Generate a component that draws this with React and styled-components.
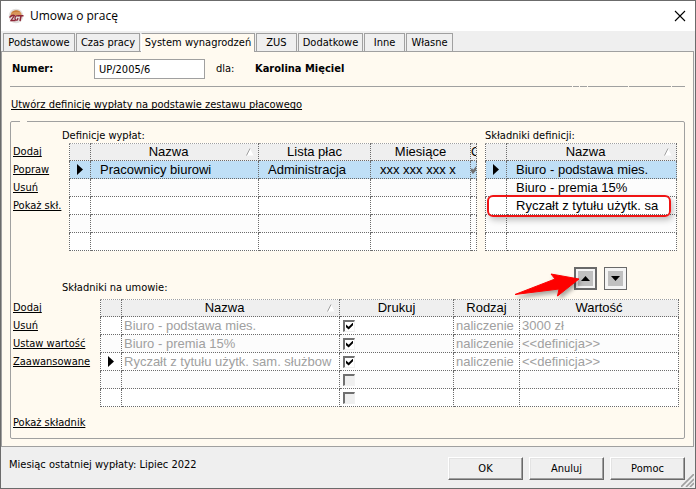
import React from "react";
import styled, { createGlobalStyle, css } from "styled-components";

const GlobalStyle = createGlobalStyle`
  * { box-sizing: border-box; }
  body {
    margin: 0;
    background: #efefef;
    color: #000;
    font: 11px/16px "DejaVu Sans Condensed", "DejaVu Sans", Tahoma, sans-serif;
  }
`;

const Window = styled.div`
  position: relative;
  display: flex;
  flex-direction: column;
  min-height: 100vh;
  border: 1px solid #6b6b6b;
  background: #efefef;
`;

const TitleBar = styled.header`
  display: flex;
  align-items: center;
  gap: 6px;
  height: 30px;
  padding: 0 9px 0 7px;
  background: #fff;
`;

const Title = styled.h1`
  flex: 1;
  margin: 0;
  font: 400 12px/16px "Open Sans", "Noto Sans", sans-serif;
`;

const CloseButton = styled.button`
  display: flex;
  padding: 0;
  border: 0;
  background: none;
`;

const TabList = styled.div`
  display: flex;
  align-items: flex-end;
  gap: 1px;
  padding: 2px 2px 0;
`;

const Tab = styled.button`
  width: ${(p) => p.$width}px;
  height: 18px;
  padding: 0 2px;
  border: 1px solid #a0a0a0;
  border-bottom: 0;
  background: ${(p) => (p.$active ? "#fffaf0" : "#efefef")};
  color: inherit;
  font: inherit;
  white-space: nowrap;
  ${(p) =>
    p.$active &&
    css`
      z-index: 1;
      height: 19px;
      margin-bottom: -1px;
      border-left-color: #fff;
    `}
`;

const Page = styled.main`
  margin-right: 1px;
  padding: 7px 8px;
  border: 1px solid #a0a0a0;
  background: #fffaf0;
`;

const ContractRow = styled.div`
  display: flex;
  align-items: center;
  padding-left: 2px;
  line-height: 18px;
`;

const NumberLabel = styled.label`
  width: 82px;
  font-weight: 700;
`;

const NumberInput = styled.input`
  width: 111px;
  height: 20px;
  margin-right: 11px;
  padding: 0 4px;
  border: 1px solid #a0a0a0;
  background: #fff;
  color: inherit;
  font: inherit;
`;

const ForLabel = styled.span`
  width: 39px;
`;

const Separator = styled.div`
  display: flex;
  gap: 1px;
  height: 1px;
  margin: 7px 0 10px;
`;

const Dash = styled.span`
  background: #a0a0a0;
  flex: ${(p) => (p.$width ? `0 0 ${p.$width}px` : "1")};
`;

const Link = styled.a`
  color: #000;
  text-decoration: underline;
  text-underline-offset: 1px;
  text-decoration-skip-ink: none;
  white-space: nowrap;
`;

const TemplateRow = styled.div`
  padding: 0 1px 8px;
`;

const Group = styled.fieldset`
  min-width: 0;
  margin: 0;
  padding: 5px 5px 7px 2px;
  border: 1px solid #a0a0a0;
  border-radius: 2px;
`;

const GroupLegend = styled.legend`
  width: 7px;
  height: 1px;
  margin-left: 7px;
  padding: 0;
`;

const UpperRow = styled.div`
  display: flex;
  padding-right: 2px;
`;

const LinkColumn = styled.nav`
  display: flex;
  flex-direction: column;
  align-items: flex-start;
  flex: 0 0 ${(p) => p.$width}px;
  margin-top: ${(p) => p.$top}px;
  line-height: 18px;
`;

const DefinitionsBlock = styled.div`
  flex: 1;
  min-width: 0;
  margin-right: 8px;
`;

const ComponentsBlock = styled.div`
  flex: 0 0 192px;
`;

const BlockLabel = styled.div`
  height: 16px;
  line-height: 18px;
  white-space: nowrap;
`;

const TableFrame = styled.div`
  position: relative;
  flex: 1;
  min-width: 0;
  margin-left: ${(p) => p.$indent || 0}px;
`;

const Table = styled.table`
  width: 100%;
  table-layout: fixed;
  border-collapse: collapse;
  background: #fff;
  font: 13px/17px "Liberation Sans", Arial, sans-serif;
`;

const Col = styled.col`
  width: ${(p) => (p.$width ? `${p.$width}px` : "auto")};
`;

const HeadCell = styled.th`
  height: 17px;
  padding: 0;
  border: 1px dotted #6b6b6b;
  border-top-color: #a0a0a0;
  background: #efefef;
  font-weight: 400;
`;

const HeadContent = styled.div`
  display: flex;
  align-items: center;
  overflow: hidden;
  height: 16px;
  padding-right: ${(p) => (p.$sorted ? 4 : 0)}px;
  line-height: 18px;
  white-space: nowrap;
`;

const HeadText = styled.span`
  flex: 1;
  text-align: center;
`;

const Row = styled.tr`
  height: 18px;
  background: ${(p) => (p.$selected ? "#bfdff6" : p.$alternate ? "#fcfcfc" : "#fff")};
`;

const Cell = styled.td`
  height: 18px;
  padding: 0;
  border: 1px dotted #6b6b6b;
  color: ${(p) => (p.$muted ? "#a0a0a0" : "#000")};
`;

const CellContent = styled.div`
  display: flex;
  align-items: center;
  overflow: hidden;
  height: 17px;
  padding-left: ${(p) => p.$indent}px;
  white-space: nowrap;
  svg { flex: none; }
`;

const Checkbox = styled.input`
  appearance: none;
  position: relative;
  width: 12px;
  height: 12px;
  margin: 0;
  border: 1px solid #f1f1f1;
  border-top: 2px solid #707070;
  border-left: 2px solid #707070;
  background: #efefef;
  &:checked { background: #fff; }
  &:checked::before {
    content: "";
    position: absolute;
    inset: 1px 1px 1px 1px;
    background: #000;
    clip-path: polygon(0 30%, 38% 62%, 100% 0, 100% 38%, 38% 100%, 0 68%);
  }
`;

const Callout = styled.div`
  position: absolute;
  top: 52px;
  left: 2px;
  right: 6px;
  height: 22px;
  border: 2px solid #f01414;
  border-radius: 6px;
  box-shadow: 2px 3px 6px rgba(0, 0, 0, 0.25);
  pointer-events: none;
`;

const MiddleRow = styled.div`
  display: flex;
  justify-content: space-between;
  height: 28px;
  margin: 16px 0 4px;
  padding: 0 52px 0 49px;
`;

const LowerLabel = styled(BlockLabel)`
  align-self: flex-end;
`;

const MoveButtons = styled.div`
  position: relative;
  display: flex;
  align-items: flex-start;
  gap: 7px;
`;

const MoveButton = styled.button`
  display: flex;
  align-items: center;
  justify-content: center;
  width: 23px;
  height: 23px;
  padding: 0;
  border: ${(p) => (p.$focused ? "2px solid #696969" : "1px solid #696969")};
  background: #c0c0c0;
  box-shadow: inset 0 0 0 ${(p) => (p.$focused ? 2 : 3)}px #f4f4f4;
`;

const PointerArrow = styled.svg`
  position: absolute;
  top: 0;
  left: -64px;
  filter: drop-shadow(2px 3px 2px rgba(0, 0, 0, 0.35));
  pointer-events: none;
`;

const LowerRow = styled.div`
  display: flex;
  align-items: flex-start;
`;

const ShowRow = styled.div`
  margin-top: 8px;
`;

const Footer = styled.footer`
  display: flex;
  justify-content: space-between;
  align-items: flex-start;
  flex: 1;
  padding: 10px 10px 8px 8px;
`;

const Actions = styled.div`
  display: flex;
  gap: 6px;
`;

const ActionButton = styled.button`
  width: 75px;
  height: 23px;
  padding: 0;
  border: 1px solid #fff;
  border-right-color: #696969;
  border-bottom-color: #696969;
  background: #efefef;
  box-shadow: inset -1px -1px 0 #a0a0a0, inset 1px 1px 0 #e3e3e3;
  color: inherit;
  font: inherit;
`;

const ResizeGrip = styled.svg`
  position: absolute;
  right: 1px;
  bottom: 1px;
`;

const AppLogo = () => (
  <svg width="16" height="16" viewBox="0 0 16 16" aria-hidden="true">
    <circle cx="8" cy="8" r="7.300" fill="#e2e0de" />
    <path d="M2.500 7A5.800 5.800 0 0 1 13.800 6.500L12.500 7.500H8L2.500 9Z" fill="#d8955a" />
    <path d="M3.500 5Q7 .8 12 4Q8 3.200 3.500 5Z" fill="#c67a35" />
    <path d="M1.500 9.500Q4 6.500 6.500 7.500L3 12.500H7.500" fill="none" stroke="#8e2637" strokeWidth="1.300" />
    <path d="M10.500 8Q7.500 7 7 10Q7 12.800 9.500 11.800L10 10" fill="none" stroke="#8e2637" strokeWidth="1.300" />
    <path d="M10 7.800H15.500M13 8L12 13" fill="none" stroke="#8e2637" strokeWidth="1.500" />
  </svg>
);

const SortMark = () => (
  <svg width="8" height="8" viewBox="0 0 8 8" aria-hidden="true">
    <path d="M4 0.5L7.5 7.5H0.5Z" fill="#fff" />
    <path d="M0.5 7.5L4 0.5" stroke="#a0a0a0" fill="none" />
  </svg>
);

const RowMarker = () => (
  <svg width="6" height="11" viewBox="0 0 6 11" aria-label="Bieżący wiersz">
    <path d="M0 0L6 5.5L0 11Z" fill="#000" />
  </svg>
);

const GrayCheck = () => (
  <svg width="9" height="9" viewBox="0 0 9 9" aria-hidden="true">
    <path d="M0 4L2 7L7 1" stroke="#707070" strokeWidth="2.6" fill="none" />
  </svg>
);

const tabs = [
  ["Podstawowe", 72],
  ["Czas pracy", 64],
  ["System wynagrodzeń", 114],
  ["ZUS", 41],
  ["Dodatkowe", 65],
  ["Inne", 41],
  ["Własne", 47],
];

const separatorDashes = [null, 6, 7, 40, 42, 13];

const definitionColumns = [
  { width: 21 },
  { title: "Nazwa", sorted: true },
  { title: "Lista płac", width: 112 },
  { title: "Miesiące", width: 100 },
  { title: "O", width: 6 },
];

const componentColumns = [{ width: 21 }, { title: "Nazwa", sorted: true }];

const contractColumns = [
  { width: 21 },
  { title: "Nazwa", sorted: true },
  { title: "Drukuj", width: 114 },
  { title: "Rodzaj", width: 66 },
  { title: "Wartość", width: 159 },
];

const contractRows = [
  ["Biuro - podstawa mies.", "naliczenie", "3000 zł"],
  ["Biuro - premia 15%", "naliczenie", "<<definicja>>"],
  ["Ryczałt z tytułu użytk. sam. służbow", "naliczenie", "<<definicja>>"],
  ["", "", ""],
  ["", "", ""],
];

function Grid({ label, columns, rows, current, selected, indent, muted }) {
  return (
    <Table aria-label={label}>
      <colgroup>
        {columns.map((c, i) => (
          <Col key={i} $width={c.width} />
        ))}
      </colgroup>
      <thead>
        <tr>
          {columns.map((c, i) => (
            <HeadCell key={i} scope="col">
              <HeadContent $sorted={c.sorted}>
                <HeadText>{c.title}</HeadText>
                {c.sorted && <SortMark />}
              </HeadContent>
            </HeadCell>
          ))}
        </tr>
      </thead>
      <tbody>
        {rows.map((cells, r) => (
          <Row key={r} $selected={r === selected} $alternate={r % 2 === 1}>
            <Cell>
              <CellContent $indent={7}>{r === current && <RowMarker />}</CellContent>
            </Cell>
            {cells.map((content, i) => (
              <Cell key={i} $muted={muted}>
                <CellContent $indent={typeof content === "string" ? indent : muted ? 3 : 0}>{content}</CellContent>
              </Cell>
            ))}
          </Row>
        ))}
      </tbody>
    </Table>
  );
}

export default function App() {
  return (
    <>
      <GlobalStyle />
      <Window>
        <TitleBar>
          <AppLogo />
          <Title>Umowa o pracę</Title>
          <CloseButton aria-label="Zamknij">
            <svg width="12" height="12" viewBox="0 0 12 12">
              <path d="M1 1L11 11M11 1L1 11" stroke="#000" strokeWidth="1.1" />
            </svg>
          </CloseButton>
        </TitleBar>

        <TabList role="tablist">
          {tabs.map(([name, width], i) => (
            <Tab key={name} role="tab" aria-selected={i === 2} $width={width} $active={i === 2}>
              {name}
            </Tab>
          ))}
        </TabList>

        <Page>
          <ContractRow>
            <NumberLabel htmlFor="number">Numer:</NumberLabel>
            <NumberInput id="number" defaultValue="UP/2005/6" />
            <ForLabel>dla:</ForLabel>
            <strong>Karolina Mięciel</strong>
          </ContractRow>
          <Separator>
            {separatorDashes.map((width, i) => (
              <Dash key={i} $width={width} />
            ))}
          </Separator>
          <TemplateRow>
            <Link href="#template">Utwórz definicję wypłaty na podstawie zestawu płacowego</Link>
          </TemplateRow>

          <Group>
            <GroupLegend />
            <UpperRow>
              <LinkColumn $width={49} $top={16}>
                <Link href="#add">Dodaj</Link>
                <Link href="#edit">Popraw</Link>
                <Link href="#delete">Usuń</Link>
                <Link href="#show">Pokaż skł.</Link>
              </LinkColumn>
              <DefinitionsBlock>
                <BlockLabel>Definicje wypłat:</BlockLabel>
                <TableFrame $indent={7}>
                  <Grid
                    label="Definicje wypłat"
                    columns={definitionColumns}
                    rows={[
                      ["Pracownicy biurowi", "Administracja", "xxx xxx xxx x", <GrayCheck key="check" />],
                      ["", "", "", ""],
                      ["", "", "", ""],
                      ["", "", "", ""],
                      ["", "", "", ""],
                    ]}
                    current={0}
                    selected={0}
                    indent={9}
                  />
                </TableFrame>
              </DefinitionsBlock>
              <ComponentsBlock>
                <BlockLabel>Składniki definicji:</BlockLabel>
                <TableFrame>
                  <Grid
                    label="Składniki definicji"
                    columns={componentColumns}
                    rows={[["Biuro - podstawa mies."], ["Biuro - premia 15%"], ["Ryczałt z tytułu użytk. sa"], [""], [""]]}
                    current={0}
                    selected={0}
                    indent={9}
                  />
                  <Callout />
                </TableFrame>
              </ComponentsBlock>
            </UpperRow>

            <MiddleRow>
              <LowerLabel>Składniki na umowie:</LowerLabel>
              <MoveButtons>
                <MoveButton $focused aria-label="W górę">
                  <svg width="9" height="5" viewBox="0 0 9 5">
                    <path d="M0 5L4.5 0L9 5Z" />
                  </svg>
                </MoveButton>
                <MoveButton aria-label="W dół">
                  <svg width="9" height="5" viewBox="0 0 9 5">
                    <path d="M0 0L4.5 5L9 0Z" />
                  </svg>
                </MoveButton>
                <PointerArrow width="72" height="34" viewBox="0 0 72 34" aria-hidden="true">
                  <path d="M5 27.5L45 12L41 7L69 12L47.500 29L49 22Z" fill="#fe0000" stroke="#fe0000" strokeLinejoin="round" />
                </PointerArrow>
              </MoveButtons>
            </MiddleRow>

            <LowerRow>
              <LinkColumn $width={87} $top={0}>
                <Link href="#add-item">Dodaj</Link>
                <Link href="#delete-item">Usuń</Link>
                <Link href="#set-value">Ustaw wartość</Link>
                <Link href="#advanced">Zaawansowane</Link>
              </LinkColumn>
              <TableFrame>
                <Grid
                  label="Składniki na umowie"
                  columns={contractColumns}
                  rows={contractRows.map(([name, kind, value], i) => [
                    name,
                    <Checkbox key="print" type="checkbox" defaultChecked={i < 3} disabled={i > 2} aria-label={`Drukuj ${name}`} />,
                    kind,
                    value,
                  ])}
                  current={2}
                  indent={2}
                  muted
                />
              </TableFrame>
            </LowerRow>
            <ShowRow>
              <Link href="#show-item">Pokaż składnik</Link>
            </ShowRow>
          </Group>
        </Page>

        <Footer>
          <span>Miesiąc ostatniej wypłaty: Lipiec 2022</span>
          <Actions>
            <ActionButton>OK</ActionButton>
            <ActionButton>Anuluj</ActionButton>
            <ActionButton>Pomoc</ActionButton>
          </Actions>
        </Footer>
        <ResizeGrip width="13" height="13" viewBox="0 0 13 13" aria-hidden="true">
          <path d="M0 13L13 0M5 13L13 5M9 13L13 9" stroke="#a0a0a0" strokeWidth="1.6" />
        </ResizeGrip>
      </Window>
    </>
  );
}
